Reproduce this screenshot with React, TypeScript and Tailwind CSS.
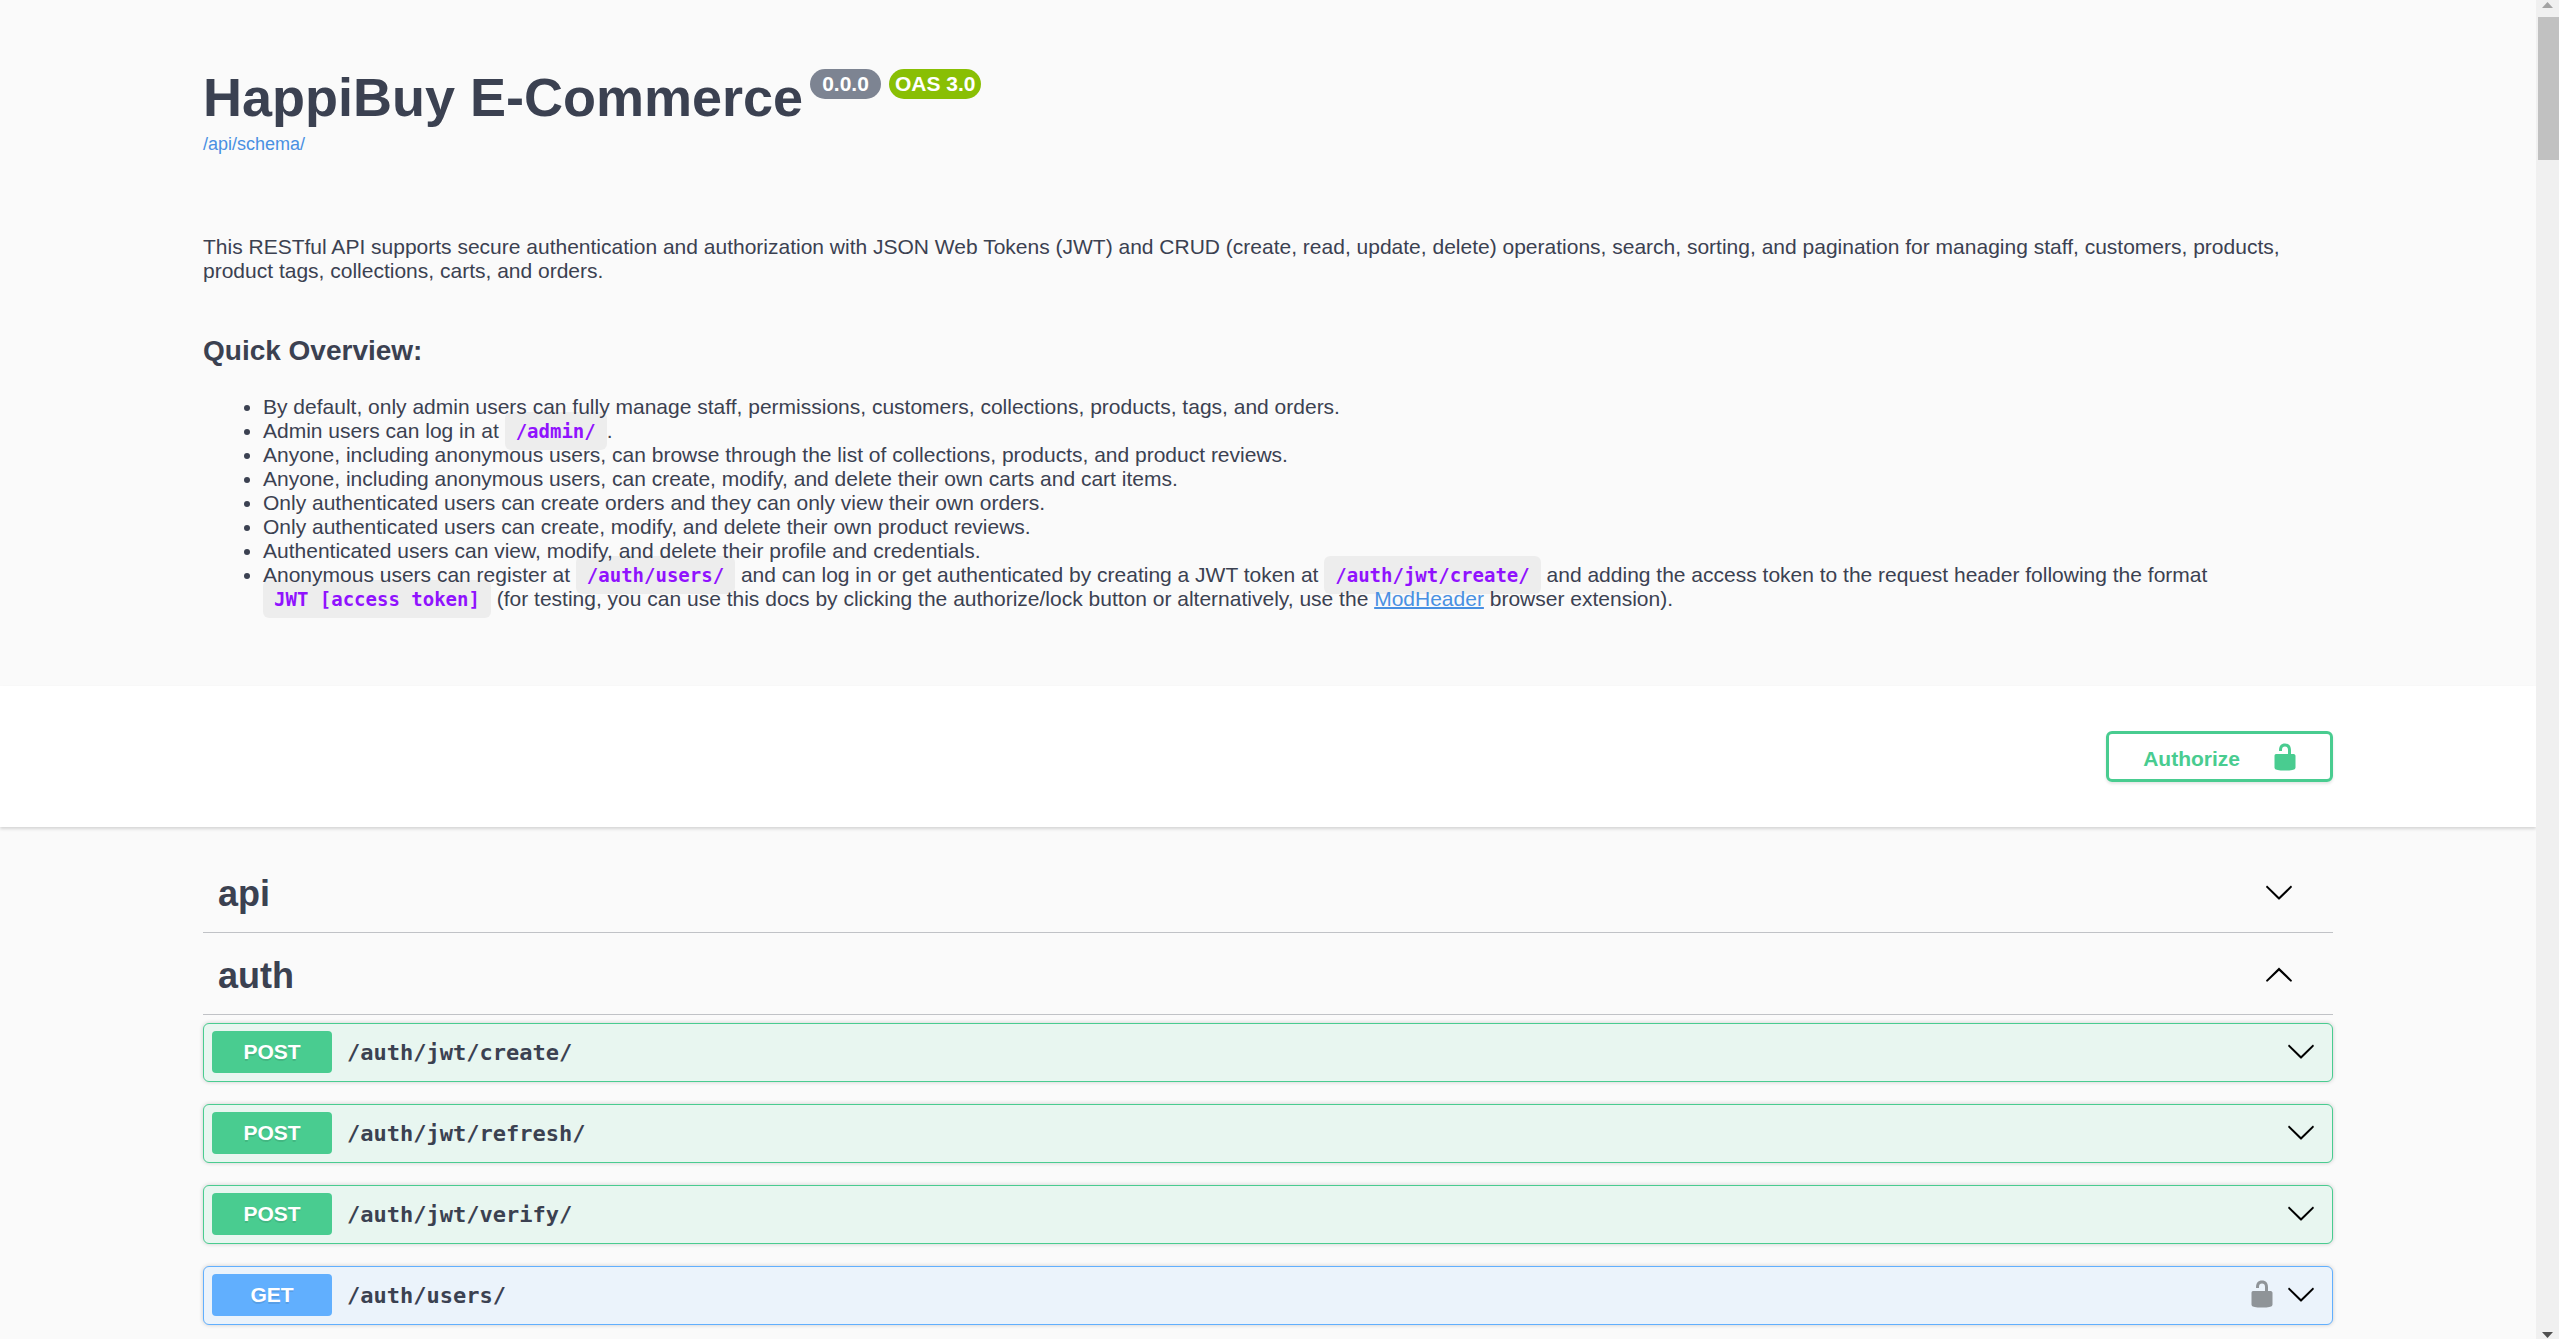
import React, { useState } from "react";

type Operation = { method: "GET" | "POST"; path: string; locked?: boolean };

const operations: Operation[] = [
  { method: "POST", path: "/auth/jwt/create/" },
  { method: "POST", path: "/auth/jwt/refresh/" },
  { method: "POST", path: "/auth/jwt/verify/" },
  { method: "GET", path: "/auth/users/", locked: true },
];

const methodStyles = {
  POST: { row: "border-[#49cc90] bg-[#e8f6f0]", badge: "bg-[#49cc90]" },
  GET: { row: "border-[#61affe] bg-[#ebf3fb]", badge: "bg-[#61affe]" },
};

function ChevronDown() {
  return (
    <svg viewBox="0 0 20 20" className="size-[30px]" fill="black" aria-hidden="true">
      <path d="M17.418 6.109c.272-.268.709-.268.979 0s.271.701 0 .969l-7.908 7.83c-.27.268-.707.268-.979 0l-7.908-7.83c-.27-.268-.27-.701 0-.969s.709-.268.979 0L10 13.25l7.418-7.141z" />
    </svg>
  );
}

function ChevronUp() {
  return (
    <svg viewBox="0 0 20 20" className="size-[30px]" fill="black" aria-hidden="true">
      <path d="M17.418 14.908c.272.268.709.268.979 0s.271-.701 0-.969l-7.908-7.83c-.27-.268-.707-.268-.979 0l-7.908 7.83c-.27.268-.27.701 0 .969s.709.268.979 0L10 7.767l7.418 7.141z" />
    </svg>
  );
}

function Unlocked() {
  return (
    <svg viewBox="0 0 20 20" className="size-[30px]" fill="currentColor" aria-hidden="true">
      <path d="M15.8 8H14V5.6C14 2.703 12.665 1 10 1 7.334 1 6 2.703 6 5.6V6h2v-.801C8 3.754 8.797 3 10 3c1.203 0 2 .754 2 2.199V8H4c-.553 0-1 .646-1 1.199V17c0 .549.428 1.139.951 1.307l1.197.387C5.672 18.861 6.55 19 7.1 19h5.8c.549 0 1.428-.139 1.951-.307l1.196-.387c.524-.167.953-.757.953-1.306V9.199C17 8.646 16.352 8 15.8 8z" />
    </svg>
  );
}

function Code({ children }: { children: React.ReactNode }) {
  return (
    <code className="rounded-md bg-black/5 px-[11px] py-2 font-['DejaVu_Sans_Mono',monospace] text-[19px] font-bold whitespace-nowrap text-[#9012fe]">
      {children}
    </code>
  );
}

function Wrapper({ children }: { children: React.ReactNode }) {
  return <div className="mx-auto w-full max-w-[2190px] px-[30px]">{children}</div>;
}

function TagHeader({ name, open, onToggle }: { name: string; open: boolean; onToggle: () => void }) {
  return (
    <h3 className="border-b border-[#3b4151]/30">
      <button
        type="button"
        aria-expanded={open}
        onClick={onToggle}
        className="flex w-full items-center justify-between pt-[22px] pr-[39px] pb-[17px] pl-[15px] text-left text-4xl leading-[42px] font-bold"
      >
        <span>{name}</span>
        <span className="mb-1">{open ? <ChevronUp /> : <ChevronDown />}</span>
      </button>
    </h3>
  );
}

function OperationRow({ method, path, locked }: Operation) {
  const style = methodStyles[method];
  return (
    <div
      className={`flex items-center rounded-md border py-[7px] pr-4 pl-2 shadow-[0_0_4px_rgba(0,0,0,0.19)] ${style.row}`}
    >
      <button type="button" className="flex flex-1 items-center gap-[15px] pb-px text-left">
        <span
          className={`w-[120px] rounded-[4px] py-[9px] text-center text-[21px] leading-6 font-bold text-white [text-shadow:0_2px_0_rgba(0,0,0,0.1)] ${style.badge}`}
        >
          {method}
        </span>
        <span className="pt-0.5 font-['DejaVu_Sans_Mono',monospace] text-[22px] leading-7 font-bold">{path}</span>
      </button>
      {locked && (
        <button type="button" aria-label="Authorization button unlocked" className="mr-[9px] mb-1 text-[#8f9498]">
          <Unlocked />
        </button>
      )}
      <button type="button" aria-label={`Expand ${path}`} className="mb-1">
        <ChevronDown />
      </button>
    </div>
  );
}

export default function App() {
  const [apiOpen, setApiOpen] = useState(false);
  const [authOpen, setAuthOpen] = useState(true);

  return (
    <div className="flex h-screen overflow-hidden bg-[#fafafa] font-['Liberation_Sans',Arial,sans-serif] text-[#3b4151]">
      <main className="min-w-0 flex-1">
        <section className="pt-[66px] pb-[75px]">
          <Wrapper>
            <header className="mb-20">
              <div className="flex items-start">
                <h1 className="text-[54px] leading-[62px] font-bold">HappiBuy E-Commerce</h1>
                <div className="mt-[3px] ml-[7px] flex gap-2 text-[21px] leading-[30px] font-bold text-white">
                  <span className="rounded-full bg-[#7d8492] px-3">0.0.0</span>
                  <span className="rounded-full bg-[#89bf04] px-1.5">OAS 3.0</span>
                </div>
              </div>
              <a href="#schema" className="mt-1.5 block w-fit text-lg leading-[21px] text-[#4990e2]">
                /api/schema/
              </a>
            </header>
            <div className="text-[21px] leading-6">
              <p>
                This RESTful API supports secure authentication and authorization with JSON Web Tokens (JWT) and CRUD
                (create, read, update, delete) operations, search, sorting, and pagination for managing staff,
                customers, products, product tags, collections, carts, and orders.
              </p>
              <h2 className="mt-[52px] mb-7 text-[28px] leading-8 font-bold">Quick Overview:</h2>
              <ul className="list-disc pl-[60px]">
                <li>
                  By default, only admin users can fully manage staff, permissions, customers, collections, products,
                  tags, and orders.
                </li>
                <li>
                  Admin users can log in at <Code>/admin/</Code>.
                </li>
                <li>
                  Anyone, including anonymous users, can browse through the list of collections, products, and product
                  reviews.
                </li>
                <li>Anyone, including anonymous users, can create, modify, and delete their own carts and cart items.</li>
                <li>Only authenticated users can create orders and they can only view their own orders.</li>
                <li>Only authenticated users can create, modify, and delete their own product reviews.</li>
                <li>Authenticated users can view, modify, and delete their profile and credentials.</li>
                <li>
                  Anonymous users can register at <Code>/auth/users/</Code> and can log in or get authenticated by
                  creating a JWT token at <Code>/auth/jwt/create/</Code> and adding the access token to the request
                  header following the format <Code>JWT [access token]</Code> (for testing, you can use this docs by
                  clicking the authorize/lock button or alternatively, use the{" "}
                  <a href="#modheader" className="text-[#4990e2] underline decoration-2">
                    ModHeader
                  </a>{" "}
                  browser extension).
                </li>
              </ul>
            </div>
          </Wrapper>
        </section>

        <section className="bg-white py-[45px] shadow-[0_2px_3px_rgba(0,0,0,0.15)]">
          <Wrapper>
            <div className="flex justify-end">
              <button
                type="button"
                className="flex items-center gap-[30px] rounded-md border-[3px] border-[#49cc90] pt-2 pr-[30px] pb-[7px] pl-[34px] text-[21px] leading-6 font-bold text-[#49cc90] shadow-[0_2px_3px_rgba(0,0,0,0.1)]"
              >
                <span className="pt-[3px]">Authorize</span>
                <Unlocked />
              </button>
            </div>
          </Wrapper>
        </section>

        <section className="pt-6">
          <Wrapper>
            <TagHeader name="api" open={apiOpen} onToggle={() => setApiOpen(!apiOpen)} />
            <TagHeader name="auth" open={authOpen} onToggle={() => setAuthOpen(!authOpen)} />
            {authOpen && (
              <div className="mt-2 flex flex-col gap-[22px]">
                {operations.map((operation) => (
                  <OperationRow key={operation.path} {...operation} />
                ))}
              </div>
            )}
          </Wrapper>
        </section>
      </main>

      <div aria-hidden="true" className="flex w-[23px] shrink-0 flex-col bg-[#f0f0f0] pl-0.5">
        <div className="flex h-[17px] shrink-0 justify-center pt-0.5 pr-[3px]">
          <svg viewBox="0 0 11 6" className="h-1.5 w-[11px]" fill="#a3a3a3">
            <path d="M5.5 0L11 6H0z" />
          </svg>
        </div>
        <div className="h-[143px] bg-[#c1c1c1]" />
        <div className="mt-auto flex justify-center pr-[3px] pb-px">
          <svg viewBox="0 0 11 6" className="h-1.5 w-[11px]" fill="#505050">
            <path d="M0 0h11L5.5 6z" />
          </svg>
        </div>
      </div>
    </div>
  );
}
